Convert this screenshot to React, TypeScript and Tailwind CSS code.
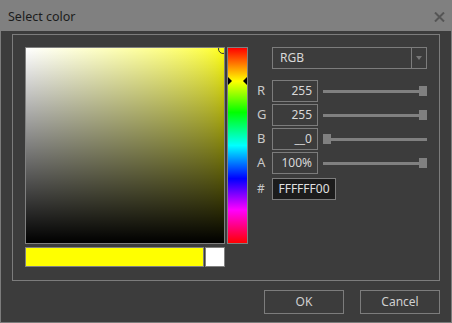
export default function App() {
  const font = { fontFamily: '"Noto Sans", "Open Sans", sans-serif' };
  const rows = [
    { label: "R", value: "255", pos: "right" },
    { label: "G", value: "255", pos: "right" },
    { label: "B", value: "__0", pos: "left" },
    { label: "A", value: "100%", pos: "right" },
  ];

  return (
    <div
      className="flex h-[323px] w-[452px] flex-col bg-[#3c3c3c] text-[12px] text-[#cfcfcf]"
      style={font}
    >
      {/* title bar */}
      <div className="flex h-[31px] items-center justify-between bg-[#808080] pl-2 pr-[7px] pt-[3px]">
        <span className="text-[12.5px] text-[#1c1c1c]">Select color</span>
        <svg width="11" height="10" viewBox="0 0 11 10" className="-mt-px">
          <path d="M1 0.5 L10 9.5 M10 0.5 L1 9.5" stroke="#555555" strokeWidth="2" />
        </svg>
      </div>

      <div className="flex flex-1 flex-col border-x border-b border-[#7c7c7c] px-[11px] pt-[3px]">
        {/* group box */}
        <div className="flex h-[247px] border border-[#7c7c7c] pl-3 pt-3">
          <div className="flex flex-col gap-[3px]">
            <div className="relative h-[197px] w-[200px] overflow-hidden border border-[#808080] bg-linear-to-r from-white to-[#ffff00]">
              <div className="h-full w-full bg-linear-to-t from-black to-transparent" />
              <div className="absolute -right-[4px] -top-[4px] h-[10px] w-[10px] rounded-full border border-[#333]" />
            </div>
            <div className="flex gap-[1px]">
              <div className="h-5 w-[179px] border border-[#808080] bg-[#ffff00]" />
              <div className="h-5 w-5 border border-[#808080] bg-white" />
            </div>
          </div>

          <div className="relative ml-[2px] h-[197px] w-[21px] border border-[#808080] bg-[linear-gradient(to_bottom,#ff0000,#ffff00_17%,#00ff00_33%,#00ffff_50%,#0000ff_67%,#ff00ff_83%,#ff0000)]">
            <div className="absolute left-0 top-[29px] h-0 w-0 border-y-[4px] border-l-[4px] border-y-transparent border-l-black" />
            <div className="absolute right-0 top-[29px] h-0 w-0 border-y-[4px] border-r-[4px] border-y-transparent border-r-black" />
          </div>

          <div className="ml-[9px] flex flex-col">
            <div className="ml-[15px] flex h-[22px] w-[155px] border border-[#7c7c7c]">
              <span className="flex flex-1 items-center pl-[7px] text-[#d8d8d8]">RGB</span>
              <div className="flex w-[15px] items-center justify-center border-l border-[#7c7c7c]">
                <div className="h-0 w-0 border-x-[3.5px] border-t-[4px] border-x-transparent border-t-[#777]" />
              </div>
            </div>

            <div className="mt-[11px] flex flex-col gap-[2px]">
              {rows.map((r) => (
                <div key={r.label} className="flex h-[22px] items-center">
                  <span className="w-[15px] text-[13px] text-[#c8c8c8]">{r.label}</span>
                  <div className="flex h-[22px] w-[46px] items-center justify-end border border-[#7c7c7c] pr-[5px] text-[#d8d8d8]">
                    {r.value}
                  </div>
                  <div className="ml-[5px] flex h-[10px] w-[104px] items-center">
                    <div className="relative h-[3px] w-full bg-[#808080]">
                      <div
                        className={
                          r.pos === "right"
                            ? "absolute -top-[4px] right-0 h-[10px] w-[8px] bg-[#808080]"
                            : "absolute -top-[4px] left-0 h-[10px] w-[8px] bg-[#808080]"
                        }
                      />
                    </div>
                  </div>
                </div>
              ))}
              <div className="mt-[2px] flex h-[22px] items-center">
                <span className="w-[15px] text-[#c8c8c8]">#</span>
                <div className="flex h-[22px] w-[64px] items-center justify-center border border-[#7c7c7c] bg-[#1c1c1c] text-[#e0e0e0]">
                  FFFFFF00
                </div>
              </div>
            </div>
          </div>
        </div>

        {/* buttons */}
        <div className="mt-[9px] flex justify-end gap-4">
          <button className="h-[24px] w-[80px] border border-[#7c7c7c] text-[#d0d0d0]">OK</button>
          <button className="h-[24px] w-[80px] border border-[#7c7c7c] text-[#d0d0d0]">Cancel</button>
        </div>
      </div>
    </div>
  );
}
